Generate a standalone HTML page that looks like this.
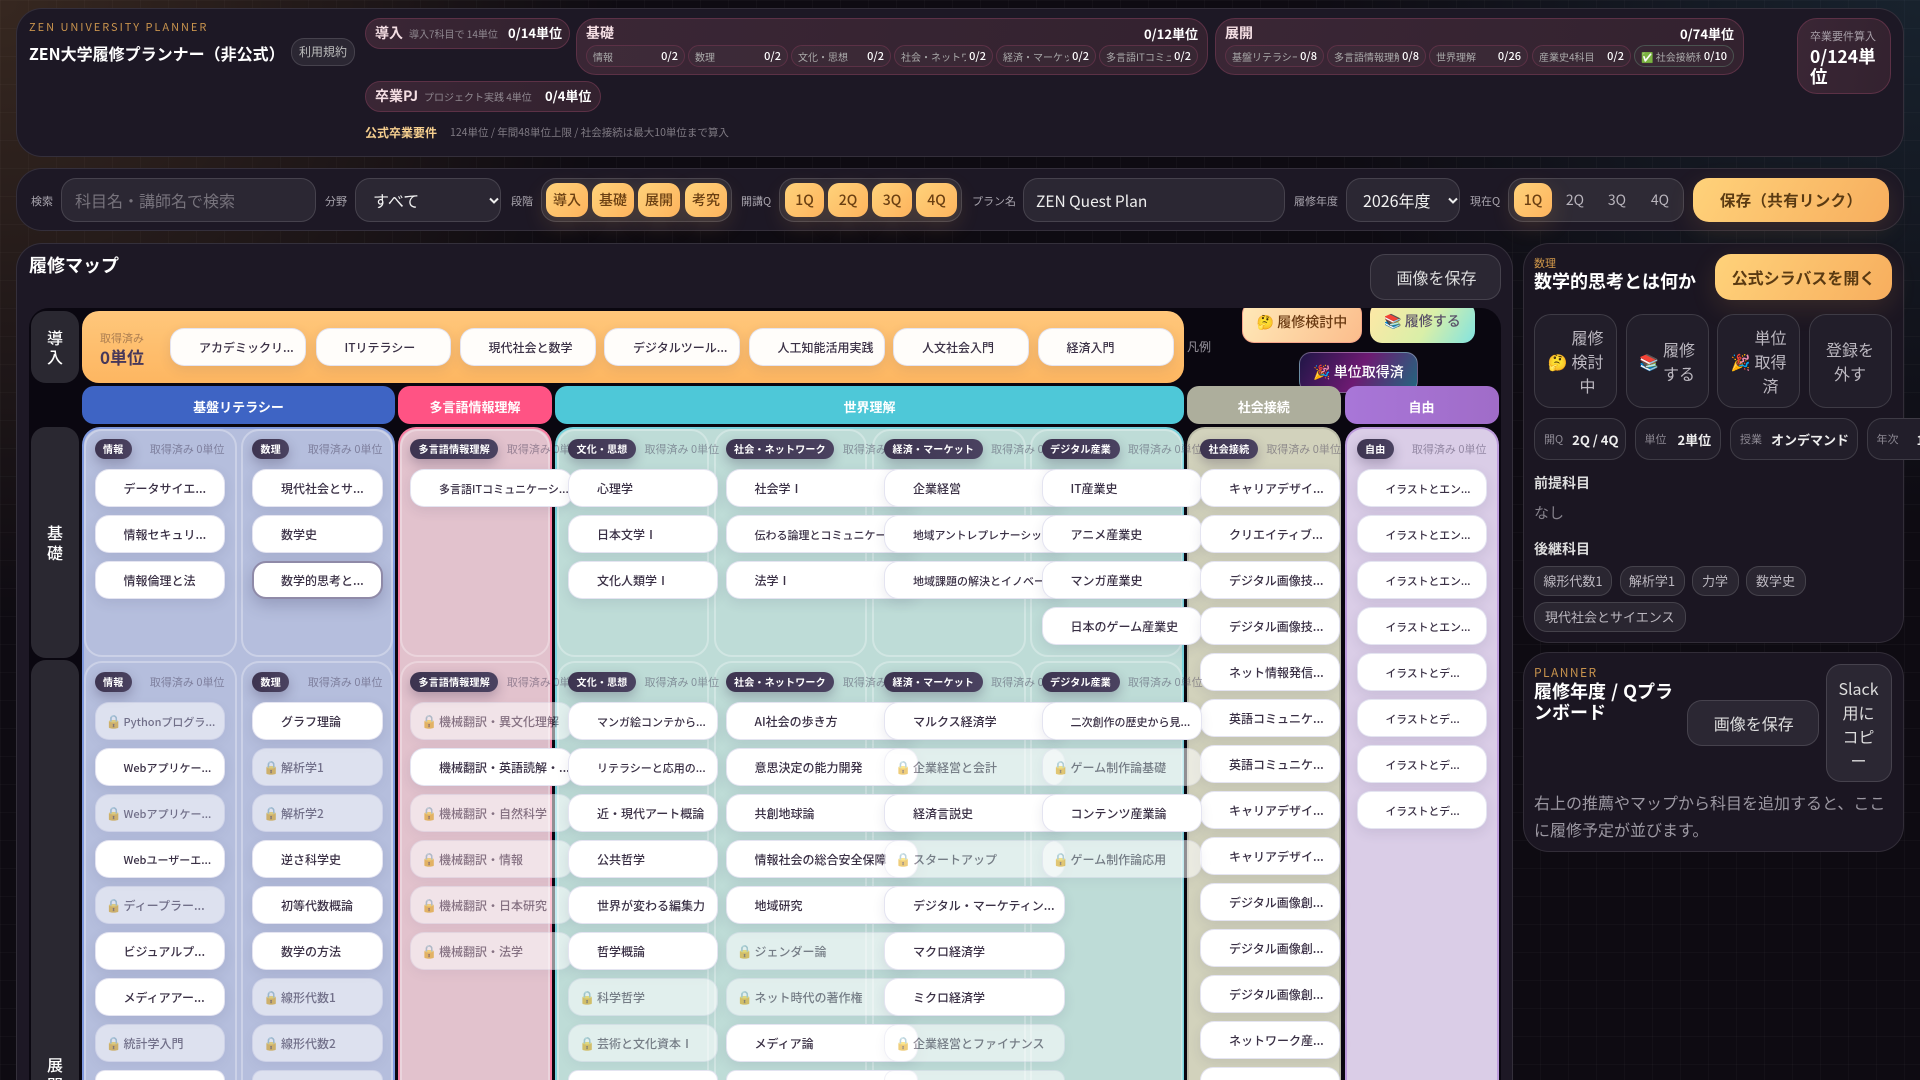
<!DOCTYPE html>
<html lang="ja"><head><meta charset="utf-8"><title>ZEN大学履修プランナー</title>
<style>
*{box-sizing:border-box}
html,body{margin:0;padding:0;width:1920px;height:1080px;overflow:hidden}
body{position:relative;background-color:#0e0b12;background-image:linear-gradient(rgba(255,255,255,.022) 1px,transparent 1px),linear-gradient(90deg,rgba(255,255,255,.022) 1px,transparent 1px),radial-gradient(620px 620px at 0 0,rgba(255,180,100,.17),transparent 100%),radial-gradient(620px 520px at 100% 0,rgba(90,190,230,.13),transparent 100%);background-size:28px 28px,28px 28px,auto,auto;font-family:"Noto Sans CJK JP","Liberation Sans","Noto Color Emoji",sans-serif;color:#eee}
#r{position:absolute;left:0;top:0;width:1920px;height:1080px;overflow:hidden}
.a{position:absolute;white-space:nowrap}
.pn{position:absolute;background:#1d1825;border:1px solid rgba(255,255,255,.1);border-radius:26px}
.ch{position:absolute;background:#38242f;background:linear-gradient(100deg,#3a2635,#33222f);border:1px solid #5c3146;border-radius:17px;white-space:nowrap}
.sc{position:absolute;top:45px;height:22px;border:1px solid #5c3146;border-radius:11px;background:rgba(255,255,255,.025);display:flex;align-items:center;padding:0 6px;white-space:nowrap}
.sc span{flex:1;min-width:0;overflow:hidden;font-size:10px;color:#aaa;margin-right:3px}
.sc b{flex:none;font-size:11px;font-weight:500;color:#fff}
.lb{position:absolute;top:192px;font-size:11px;color:#a9a5ae;line-height:18px;white-space:nowrap}
.fd{position:absolute;top:178px;height:44px;background:#2b2733;border:1px solid rgba(255,255,255,.13);border-radius:15px;font-size:16px;line-height:42px;white-space:nowrap}
.sg{position:absolute;top:178px;height:44px;background:#2e2a35;border:1px solid rgba(255,255,255,.13);border-radius:15px}
.q{position:absolute;top:183px;height:34px;line-height:35px;text-align:center;font-size:14px;font-weight:500;color:#6a3f12;background:linear-gradient(135deg,#ffd27a,#fdb45e);border-radius:11px;box-shadow:0 8px 24px rgba(255,180,90,.16)}
.gh{position:absolute;top:183px;height:34px;line-height:35px;width:38px;text-align:center;font-size:14px;color:#b9b5bd}
.bt{position:absolute;background:#2b2733;border:1px solid rgba(255,255,255,.13);border-radius:15px;color:#ddd;font-size:16px;text-align:center;white-space:nowrap}
.or{position:absolute;background:linear-gradient(120deg,#ffd27a,#f7ae5e);border-radius:16px;color:#5a3a12;font-weight:700;text-align:center;white-space:nowrap;box-shadow:0 8px 26px rgba(255,180,90,.13)}
.st{position:absolute;top:314px;height:94px;width:83px;background:#221e2a;border:1px solid rgba(255,255,255,.13);border-radius:17px;display:flex;align-items:center;justify-content:center;gap:4px;font-size:16px;line-height:24px;color:#bcb8c0;text-align:center}
.mt{position:absolute;top:418px;height:42px;background:#221e2a;border:1px solid rgba(255,255,255,.13);border-radius:15px;display:flex;align-items:center;gap:9px;padding:0 9px;white-space:nowrap;overflow:hidden}
.mt span{font-size:11px;color:#8e8a94}.mt b{font-size:13px;color:#eee}
.tg{position:absolute;height:30px;line-height:28px;background:#2a2631;border:1px solid rgba(255,255,255,.13);border-radius:13px;text-align:center;font-size:13px;color:#bcb8c0;white-space:nowrap}
#map{position:absolute;left:29px;top:308px;width:1472px;height:772px;background:#0a0710;border-radius:20px 20px 0 0;overflow:hidden}
#in{position:absolute;left:-29px;top:-308px;width:1920px;height:1080px}
.rl{position:absolute;left:31px;width:48px;background:#2a2831;border-radius:15px;color:#fff;font-size:16px;font-weight:500;text-align:center;line-height:19px;overflow:hidden}
.hd{position:absolute;top:386px;height:38px;line-height:41px;border-radius:12px;color:#fff;font-size:13px;font-weight:700;text-align:center;overflow:hidden}
.ln{position:absolute;top:427px;height:653px;border:2px solid;border-bottom:0;border-radius:18px 18px 0 0}
.sb{position:absolute;border:2px solid rgba(255,255,255,.3);border-radius:18px}
.sb2{top:661px;height:419px;border-bottom:0;border-radius:18px 18px 0 0}
.col{position:absolute}
.h{display:flex;justify-content:space-between;gap:8.5px;height:20px;margin-bottom:10.3px;white-space:nowrap;align-items:center}
.p{flex:none;height:20px;line-height:20px;border-radius:10px;padding:0 8.5px;background:linear-gradient(90deg,#3d3450,#4a4260);color:#fff;font-size:10px;font-weight:700;box-shadow:0 5px 12px rgba(40,30,60,.28);letter-spacing:.02em}
.h i{font-style:normal;font-size:11px;color:rgba(60,50,80,.45);flex:none}
.k{position:relative;height:38px;margin-bottom:8px;padding:1px 0 0 28px;background:#fff;border:1px solid rgba(225,225,240,.9);border-radius:14px;box-shadow:0 4px 12px rgba(50,50,90,.1);font-size:12px;font-weight:500;line-height:36px;color:#3a3045;white-space:nowrap;overflow:hidden}
.e{height:9.7px;margin:0;border-bottom:0;border-radius:14px 14px 0 0;box-shadow:none}
.s{font-size:11px}.t{font-size:10.8px}
.l{opacity:.55}
.l u{position:absolute;left:10px;top:0;text-decoration:none;font-size:13px}
.sel{border:2px solid #8f8aa8;box-shadow:0 6px 16px rgba(50,50,90,.25);line-height:34px;padding-left:27px}
.ob{position:absolute;top:328px;width:136px;margin:0;background:#fffdfa}
</style></head><body><div id="r">

<div class="pn" style="left:16px;top:8px;width:1888px;height:149px"></div>
<div class="a" style="left:29px;top:18px;font-size:11px;line-height:18px;letter-spacing:.18em;color:#c8934d">ZEN UNIVERSITY PLANNER</div>
<div class="a" style="left:29px;top:41px;font-size:16px;line-height:24px;font-weight:700;color:#fff">ZEN大学履修プランナー（非公式）</div>
<div class="bt" style="left:291px;top:38px;width:64px;height:28px;line-height:26px;font-size:12px;border-radius:13px;color:#bbb">利用規約</div>

<div class="ch" style="left:365px;top:18px;width:205px;height:31px"></div>
<div class="a" style="left:375px;top:22px;font-size:14px;line-height:22px;font-weight:700;color:#f5dfe4">導入</div>
<div class="a" style="left:409px;top:25px;font-size:10px;line-height:18px;color:#8f8890">導入7科目で 14単位</div>
<div class="a" style="left:508px;top:22px;font-size:13px;line-height:22px;font-weight:700;color:#fff">0/14単位</div>

<div class="ch" style="left:365px;top:81px;width:236px;height:31px"></div>
<div class="a" style="left:375px;top:85px;font-size:14px;line-height:22px;font-weight:700;color:#f5dfe4">卒業PJ</div>
<div class="a" style="left:424px;top:88px;font-size:10px;line-height:18px;color:#8f8890">プロジェクト実践 4単位</div>
<div class="a" style="left:545px;top:85px;font-size:13px;line-height:22px;font-weight:700;color:#fff">0/4単位</div>

<div class="ch" style="left:576px;top:18px;width:632px;height:57px;border-radius:20px"></div>
<div class="a" style="left:586px;top:23px;font-size:14px;line-height:21px;font-weight:700;color:#f5dfe4">基礎</div>
<div class="a" style="right:722px;top:23px;font-size:13px;line-height:21px;font-weight:700;color:#fff">0/12単位</div>
<div class="sc" style="left:586px;width:99px"><span>情報</span><b>0/2</b></div>
<div class="sc" style="left:688px;width:100px"><span>数理</span><b>0/2</b></div>
<div class="sc" style="left:791px;width:100px"><span>文化・思想</span><b>0/2</b></div>
<div class="sc" style="left:894px;width:99px"><span>社会・ネットワーク</span><b>0/2</b></div>
<div class="sc" style="left:996px;width:100px"><span>経済・マーケット</span><b>0/2</b></div>
<div class="sc" style="left:1099px;width:99px"><span>多言語ITコミュニケーション</span><b>0/2</b></div>

<div class="ch" style="left:1215px;top:18px;width:529px;height:57px;border-radius:20px"></div>
<div class="a" style="left:1225px;top:23px;font-size:14px;line-height:21px;font-weight:700;color:#f5dfe4">展開</div>
<div class="a" style="right:186px;top:23px;font-size:13px;line-height:21px;font-weight:700;color:#fff">0/74単位</div>
<div class="sc" style="left:1225px;width:99px"><span>基盤リテラシー</span><b>0/8</b></div>
<div class="sc" style="left:1327px;width:99px"><span>多言語情報理解</span><b>0/8</b></div>
<div class="sc" style="left:1429px;width:99px"><span>世界理解</span><b>0/26</b></div>
<div class="sc" style="left:1532px;width:99px"><span>産業史4科目</span><b>0/2</b></div>
<div class="sc" style="left:1634px;width:100px;border-color:#4a5350"><span>✅ 社会接続科目</span><b>0/10</b></div>

<div class="ch" style="left:1797px;top:18px;width:94px;height:76px;border-radius:20px"></div>
<div class="a" style="left:1810px;top:27px;font-size:11px;line-height:18px;color:#a79fa8">卒業要件算入</div>
<div class="a" style="left:1810px;top:47px;font-size:17.5px;line-height:20px;font-weight:700;color:#fff">0/124単<br>位</div>

<div class="a" style="left:365px;top:124px;font-size:12px;line-height:18px;font-weight:700;color:#f6cf8f">公式卒業要件</div>
<div class="a" style="left:450px;top:124px;font-size:10.5px;line-height:18px;color:#807b84">124単位 / 年間48単位上限 / 社会接続は最大10単位まで算入</div>

<div class="pn" style="left:16px;top:168px;width:1888px;height:63px"></div>
<div class="lb" style="left:31px">検索</div>
<div class="fd" style="left:61px;width:255px;padding-left:13px;color:#77737c">科目名・講師名で検索</div>
<div class="lb" style="left:325px">分野</div>
<div class="fd" style="left:355px;width:146px;padding-left:17px;color:#f2f2f2">すべて<svg style="position:absolute;left:133px;top:18px" width="10" height="8" viewBox="0 0 10 8"><path d="M1 1.5L5 5.5L9 1.5" fill="none" stroke="#eee" stroke-width="2"/></svg></div>
<div class="lb" style="left:511px">段階</div>
<div class="sg" style="left:541px;width:191px"></div>
<div class="q" style="left:546px;width:42px">導入</div><div class="q" style="left:592px;width:42px">基礎</div><div class="q" style="left:638px;width:42px">展開</div><div class="q" style="left:685px;width:42px">考究</div>
<div class="lb" style="left:741px">開講Q</div>
<div class="sg" style="left:779px;width:183px"></div>
<div class="q" style="left:785px;width:39px">1Q</div><div class="q" style="left:828px;width:40px">2Q</div><div class="q" style="left:872px;width:40px">3Q</div><div class="q" style="left:916px;width:41px">4Q</div>
<div class="lb" style="left:972px">プラン名</div>
<div class="fd" style="left:1023px;width:262px;padding-left:12px;font-size:15.5px;line-height:44px;color:#efefef">ZEN Quest Plan</div>
<div class="lb" style="left:1294px">履修年度</div>
<div class="fd" style="left:1346px;width:114px;padding-left:16px;color:#f2f2f2">2026年度<svg style="position:absolute;left:101px;top:18px" width="10" height="8" viewBox="0 0 10 8"><path d="M1 1.5L5 5.5L9 1.5" fill="none" stroke="#eee" stroke-width="2"/></svg></div>
<div class="lb" style="left:1470px">現在Q</div>
<div class="sg" style="left:1508px;width:176px"></div>
<div class="q" style="left:1514px;width:38px">1Q</div>
<div class="gh" style="left:1556px">2Q</div><div class="gh" style="left:1598px">3Q</div><div class="gh" style="left:1641px">4Q</div>
<div class="or" style="left:1693px;top:178px;width:196px;height:44px;line-height:45px;font-size:15.5px;letter-spacing:.02em">保存（共有リンク）</div>

<div class="pn" style="left:16px;top:243px;width:1497px;height:837px;border-bottom:0;border-radius:26px 26px 0 0"></div>
<div class="a" style="left:29px;top:252px;font-size:18px;line-height:26px;font-weight:700;color:#fff">履修マップ</div>
<div class="bt" style="left:1370px;top:254px;width:131px;height:46px;line-height:44px;padding-left:2px">画像を保存</div>

<div id="map"><div id="in">
<div class="a" style="left:1187px;top:338px;font-size:12px;line-height:18px;color:#9a96a0">凡例</div>
<div class="a" style="left:1242px;top:302px;width:120px;height:41px;border-radius:12px;background:linear-gradient(120deg,#ffe9b8,#fbbd8c);border:1px solid #f5a58a;line-height:39px;text-align:center;font-size:14px;font-weight:500;color:#6a3a12">🤔 履修検討中</div>
<div class="a" style="left:1370px;top:302px;width:105px;height:41px;border-radius:12px;background:linear-gradient(120deg,#ffe8a6,#d9efa8 55%,#82e3e0);line-height:39px;text-align:center;font-size:14px;font-weight:500;color:#5a5068">📚 履修する</div>
<div class="a" style="left:1299px;top:352px;width:119px;height:41px;border-radius:12px;background:linear-gradient(120deg,#1f1646,#6d1a72 50%,#20697f);border:1px solid rgba(255,255,255,.3);line-height:39px;text-align:center;font-size:14px;font-weight:500;color:#fff">🎉 単位取得済</div>

<div class="rl" style="top:311px;height:72px;padding-top:17px">導<br>入</div>
<div class="rl" style="top:427px;height:231px;padding-top:95px;line-height:20px">基<br>礎</div>
<div class="rl" style="top:660px;height:420px;padding-top:394px;line-height:20px;border-radius:15px 15px 0 0">展<br>開</div>

<div class="a" style="left:82px;top:311px;width:1102px;height:72px;border-radius:17px;background:linear-gradient(180deg,#ffc77b,#fdb661)"></div>
<div class="a" style="left:100px;top:329px;font-size:11px;line-height:18px;color:rgba(90,60,50,.5)">取得済み</div>
<div class="a" style="left:100px;top:344px;font-size:17px;line-height:26px;font-weight:700;color:#47385a">0単位</div>
<div class="k ob" style="left:170px">アカデミックリ...</div>
<div class="k ob" style="left:315.5px;width:135px">ITリテラシー</div>
<div class="k ob" style="left:459.5px">現代社会と数学</div>
<div class="k ob" style="left:604px">デジタルツール...</div>
<div class="k ob" style="left:748.5px">人工知能活用実践</div>
<div class="k ob" style="left:893px;width:135.5px">人文社会入門</div>
<div class="k ob" style="left:1037.5px">経済入門</div>

<div class="hd" style="left:82px;width:313px;background:#3e64c4">基盤リテラシー</div>
<div class="hd" style="left:398px;width:154px;background:#ff5384">多言語情報理解</div>
<div class="hd" style="left:555px;width:629px;background:#4ec8d8">世界理解</div>
<div class="hd" style="left:1187px;width:153.5px;background:#adae9c">社会接続</div>
<div class="hd" style="left:1344.5px;width:154px;background:linear-gradient(90deg,#a876d8,#a06cc8)">自由</div>

<div class="ln" style="left:82px;width:313px;background:#b5bedd;border-color:#7f99de"></div>
<div class="ln" style="left:398px;width:154px;background:#e2c2cd;border-color:#f97fa3"></div>
<div class="ln" style="left:555px;width:629px;background:#bedcd7;border-color:#79d4de"></div>
<div class="ln" style="left:1187px;width:153.5px;background:#d2d2bc;border-color:#bcbda9"></div>
<div class="ln" style="left:1344.5px;width:154px;background:#dacde7;border-color:#bd9cdc"></div>

<div class="sb" style="left:84px;top:428.5px;width:153px;height:228px"></div><div class="sb" style="left:241px;top:428.5px;width:152px;height:228px"></div>
<div class="sb" style="left:400px;top:428.5px;width:150px;height:228px"></div>
<div class="sb" style="left:557px;top:428.5px;width:152px;height:228px"></div><div class="sb" style="left:713.5px;top:428.5px;width:153.5px;height:228px"></div><div class="sb" style="left:871.5px;top:428.5px;width:154px;height:228px"></div><div class="sb" style="left:1030px;top:428.5px;width:153px;height:228px"></div>
<div class="sb sb2" style="left:84px;width:153px"></div><div class="sb sb2" style="left:241px;width:152px"></div>
<div class="sb sb2" style="left:400px;width:150px"></div>
<div class="sb sb2" style="left:557px;width:152px"></div><div class="sb sb2" style="left:713.5px;width:153.5px"></div><div class="sb sb2" style="left:871.5px;width:154px"></div><div class="sb sb2" style="left:1030px;width:153px"></div>

<!-- row 基礎 -->
<div class="col" style="left:94.5px;top:439px;width:130px"><div class="h"><b class="p">情報</b><i>取得済み 0単位</i></div>
<div class="k">データサイエ...</div><div class="k">情報セキュリ...</div><div class="k">情報倫理と法</div></div>
<div class="col" style="left:252px;top:439px;width:130.5px"><div class="h"><b class="p">数理</b><i>取得済み 0単位</i></div>
<div class="k">現代社会とサ...</div><div class="k">数学史</div><div class="k sel">数学的思考と...</div></div>
<div class="col" style="left:410px;top:439px;width:163px"><div class="h"><b class="p">多言語情報理解</b><i>取得済み 0単位</i></div>
<div class="k s">多言語ITコミュニケーシ...</div></div>
<div class="col" style="left:568px;top:439px;width:150px"><div class="h"><b class="p">文化・思想</b><i>取得済み 0単位</i></div>
<div class="k">心理学</div><div class="k">日本文学Ⅰ</div><div class="k">文化人類学Ⅰ</div></div>
<div class="col" style="left:725.5px;top:439px;width:192px"><div class="h"><b class="p">社会・ネットワーク</b><i>取得済み 0単位</i></div>
<div class="k">社会学Ⅰ</div><div class="k s">伝わる論理とコミュニケーシ...</div><div class="k">法学Ⅰ</div></div>
<div class="col" style="left:884px;top:439px;width:181px"><div class="h"><b class="p">経済・マーケット</b><i>取得済み 0単位</i></div>
<div class="k">企業経営</div><div class="k t">地域アントレプレナーシップ</div><div class="k s">地域課題の解決とイノベー...</div></div>
<div class="col" style="left:1041.5px;top:439px;width:160.5px"><div class="h"><b class="p">デジタル産業</b><i>取得済み 0単位</i></div>
<div class="k">IT産業史</div><div class="k">アニメ産業史</div><div class="k">マンガ産業史</div><div class="k">日本のゲーム産業史</div></div>
<div class="col" style="left:1200px;top:439px;width:139.5px"><div class="h"><b class="p">社会接続</b><i>取得済み 0単位</i></div>
<div class="k">キャリアデザイ...</div><div class="k">クリエイティブ...</div><div class="k">デジタル画像技...</div><div class="k">デジタル画像技...</div><div class="k">ネット情報発信...</div><div class="k">英語コミュニケ...</div><div class="k">英語コミュニケ...</div><div class="k">キャリアデザイ...</div><div class="k">キャリアデザイ...</div><div class="k">デジタル画像創...</div><div class="k">デジタル画像創...</div><div class="k">デジタル画像創...</div><div class="k">ネットワーク産...</div><div class="k e" style="height:12.7px"></div></div>
<div class="col" style="left:1356.5px;top:439px;width:130px"><div class="h"><b class="p">自由</b><i>取得済み 0単位</i></div>
<div class="k t">イラストとエン...</div><div class="k t">イラストとエン...</div><div class="k t">イラストとエン...</div><div class="k t">イラストとエン...</div><div class="k t">イラストとデ...</div><div class="k t">イラストとデ...</div><div class="k t">イラストとデ...</div><div class="k t">イラストとデ...</div></div>

<!-- row 展開 -->
<div class="col" style="left:94.5px;top:672px;width:130px"><div class="h"><b class="p">情報</b><i>取得済み 0単位</i></div>
<div class="k l s"><u>🔒</u>Pythonプログラ...</div><div class="k s">Webアプリケー...</div><div class="k l s"><u>🔒</u>Webアプリケー...</div><div class="k s">Webユーザーエ...</div><div class="k l"><u>🔒</u>ディープラー...</div><div class="k">ビジュアルプ...</div><div class="k">メディアアー...</div><div class="k l"><u>🔒</u>統計学入門</div><div class="k e"></div></div>
<div class="col" style="left:252px;top:672px;width:130.5px"><div class="h"><b class="p">数理</b><i>取得済み 0単位</i></div>
<div class="k">グラフ理論</div><div class="k l"><u>🔒</u>解析学1</div><div class="k l"><u>🔒</u>解析学2</div><div class="k">逆さ科学史</div><div class="k">初等代数概論</div><div class="k">数学の方法</div><div class="k l"><u>🔒</u>線形代数1</div><div class="k l"><u>🔒</u>線形代数2</div><div class="k l e"></div></div>
<div class="col" style="left:410px;top:672px;width:163px"><div class="h"><b class="p">多言語情報理解</b><i>取得済み 0単位</i></div>
<div class="k l"><u>🔒</u>機械翻訳・異文化理解</div><div class="k">機械翻訳・英語読解・...</div><div class="k l"><u>🔒</u>機械翻訳・自然科学</div><div class="k l"><u>🔒</u>機械翻訳・情報</div><div class="k l"><u>🔒</u>機械翻訳・日本研究</div><div class="k l"><u>🔒</u>機械翻訳・法学</div></div>
<div class="col" style="left:568px;top:672px;width:150px"><div class="h"><b class="p">文化・思想</b><i>取得済み 0単位</i></div>
<div class="k s">マンガ絵コンテから...</div><div class="k s">リテラシーと応用の...</div><div class="k">近・現代アート概論</div><div class="k">公共哲学</div><div class="k">世界が変わる編集力</div><div class="k">哲学概論</div><div class="k l"><u>🔒</u>科学哲学</div><div class="k l"><u>🔒</u>芸術と文化資本Ⅰ</div><div class="k e"></div></div>
<div class="col" style="left:725.5px;top:672px;width:192px"><div class="h"><b class="p">社会・ネットワーク</b><i>取得済み 0単位</i></div>
<div class="k">AI社会の歩き方</div><div class="k">意思決定の能力開発</div><div class="k">共創地球論</div><div class="k">情報社会の総合安全保障</div><div class="k">地域研究</div><div class="k l"><u>🔒</u>ジェンダー論</div><div class="k l"><u>🔒</u>ネット時代の著作権</div><div class="k">メディア論</div><div class="k e"></div></div>
<div class="col" style="left:884px;top:672px;width:181px"><div class="h"><b class="p">経済・マーケット</b><i>取得済み 0単位</i></div>
<div class="k">マルクス経済学</div><div class="k l"><u>🔒</u>企業経営と会計</div><div class="k">経済言説史</div><div class="k l"><u>🔒</u>スタートアップ</div><div class="k">デジタル・マーケティン...</div><div class="k">マクロ経済学</div><div class="k">ミクロ経済学</div><div class="k l"><u>🔒</u>企業経営とファイナンス</div><div class="k l e"></div></div>
<div class="col" style="left:1041.5px;top:672px;width:160.5px"><div class="h"><b class="p">デジタル産業</b><i>取得済み 0単位</i></div>
<div class="k s">二次創作の歴史から見...</div><div class="k l"><u>🔒</u>ゲーム制作論基礎</div><div class="k">コンテンツ産業論</div><div class="k l"><u>🔒</u>ゲーム制作論応用</div></div>
</div></div>

<div class="pn" style="left:1523px;top:243px;width:381px;height:400px;background:#1b1622"></div>
<div class="a" style="left:1534px;top:254px;font-size:11px;line-height:18px;color:#d49a4a">数理</div>
<div class="a" style="left:1534px;top:268px;font-size:18px;line-height:26px;font-weight:700;color:#fff">数学的思考とは何か</div>
<div class="or" style="left:1715px;top:254px;width:177px;height:46px;line-height:46px;font-size:16px">公式シラバスを開く</div>
<div class="st" style="left:1534px"><span>🤔</span><span>履修<br>検討<br>中</span></div>
<div class="st" style="left:1625.5px"><span>📚</span><span>履修<br>する</span></div>
<div class="st" style="left:1717px"><span>🎉</span><span>単位<br>取得<br>済</span></div>
<div class="st" style="left:1808.5px"><span>登録を<br>外す</span></div>
<div class="mt" style="left:1534px;width:91.5px"><span>開Q</span><b>2Q / 4Q</b></div>
<div class="mt" style="left:1634.5px;width:86.5px;gap:11px"><span>単位</span><b>2単位</b></div>
<div class="mt" style="left:1730px;width:128px"><span>授業</span><b>オンデマンド</b></div>
<div class="mt" style="left:1866.5px;width:53.5px;gap:18px;border-right:0;border-radius:15px 0 0 15px"><span>年次</span><b>1</b></div>
<div class="a" style="left:1534px;top:472px;font-size:14px;line-height:22px;font-weight:700;color:#ddd">前提科目</div>
<div class="a" style="left:1534px;top:501px;font-size:15px;line-height:24px;color:#85818b">なし</div>
<div class="a" style="left:1534px;top:538px;font-size:14px;line-height:22px;font-weight:700;color:#ddd">後継科目</div>
<div class="tg" style="left:1534px;top:566px;width:78px">線形代数1</div>
<div class="tg" style="left:1619.5px;top:566px;width:65px">解析学1</div>
<div class="tg" style="left:1691.5px;top:566px;width:47px">力学</div>
<div class="tg" style="left:1745.5px;top:566px;width:60px">数学史</div>
<div class="tg" style="left:1534px;top:602px;width:151.5px">現代社会とサイエンス</div>

<div class="pn" style="left:1523px;top:652px;width:381px;height:200px;background:#1b1622"></div>
<div class="a" style="left:1534px;top:664px;font-size:12px;line-height:18px;letter-spacing:.12em;color:#c8934d">PLANNER</div>
<div class="a" style="left:1534px;top:681px;font-size:18px;line-height:21px;font-weight:700;color:#fff;word-spacing:1px">履修年度 / Qプラ<br>ンボード</div>
<div class="bt" style="left:1687px;top:700px;width:131.5px;height:46px;line-height:44px;padding-left:2px">画像を保存</div>
<div class="bt" style="left:1825.5px;top:664px;width:66px;height:118px;padding-top:11px;line-height:24px;font-size:16px">Slack<br>用に<br>コピ<br>ー</div>
<div class="a" style="left:1534px;top:789px;font-size:16px;line-height:26.7px;color:#9c98a2">右上の推薦やマップから科目を追加すると、ここ<br>に履修予定が並びます。</div>
</div></body></html>
